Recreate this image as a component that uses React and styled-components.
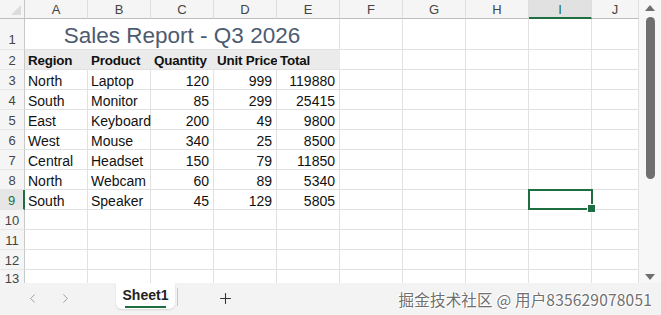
import React from "react";
import styled, { createGlobalStyle } from "styled-components";
import { ChevronLeft, ChevronRight, Plus } from "lucide-react";

const Global = createGlobalStyle`
  html, body { margin: 0; padding: 0; overflow: hidden; background: #fff; }
  * { box-sizing: border-box; }
`;

const GREEN = "#1e6e42";
const GRID = "#e1e1e1";
const FONT = `"Liberation Sans", Arial, sans-serif`;

const Page = styled.div`
  width: 661px;
  height: 315px;
  display: flex;
  flex-direction: column;
  font-family: ${FONT};
  position: relative;
  overflow: hidden;
`;

const Body = styled.div`
  display: flex;
  height: 283px;
  overflow: hidden;
`;

const Sheet = styled.div`
  display: grid;
  grid-template-columns: 25px repeat(9, 63px) 47px;
  grid-template-rows: 19px 31px repeat(11, 20px);
  width: 639px;
  overflow: hidden;
`;

const Corner = styled.div`
  background: #f5f5f5;
  border-right: 1px solid #c8c8c8;
  border-bottom: 1px solid #bdbdbd;
  position: relative;
  &::after {
    content: "";
    position: absolute;
    right: 3px;
    bottom: 3px;
    border-left: 10px solid transparent;
    border-bottom: 10px solid #dcdcdc;
  }
`;

const ColHeader = styled.div`
  background: ${(p) => (p.$active ? "#e1e1e1" : "#f5f5f5")};
  color: ${(p) => (p.$active ? GREEN : "#444")};
  border-right: 1px solid #dedede;
  border-bottom: ${(p) => (p.$active ? `2px solid ${GREEN}` : "1px solid #bdbdbd")};
  font-size: 13px;
  display: flex;
  align-items: center;
  justify-content: center;
  padding-top: 1px;
`;

const RowHeader = styled.div`
  background: ${(p) => (p.$active ? "#e6e6e6" : "#f5f5f5")};
  color: ${(p) => (p.$active ? GREEN : "#444")};
  border-right: ${(p) => (p.$active ? `2px solid ${GREEN}` : "1px solid #c8c8c8")};
  border-bottom: 1px solid #e6e6e6;
  font-size: 13px;
  display: flex;
  align-items: center;
  justify-content: center;
  padding-top: ${(p) => (p.$tall ? "10px" : "1px")};
`;

const Cell = styled.div`
  position: relative;
  background: ${(p) => p.$fill || "#fff"};
  border-right: 1px solid ${(p) => p.$fill || GRID};
  border-bottom: 1px solid ${GRID};
  font-size: 14px;
  font-weight: ${(p) => (p.$bold ? 700 : 400)};
  color: #111;
  display: flex;
  align-items: center;
  justify-content: ${(p) => (p.$align === "right" ? "flex-end" : "flex-start")};
  padding: 2px 4px 0 3px;
  white-space: nowrap;
  overflow: visible;
  z-index: ${(p) => (p.$selected ? 3 : p.$bold ? 1 : 0)};
`;

const HeadText = styled.span`
  font-size: 13.4px;
  letter-spacing: -0.2px;
`;

const TitleCell = styled.div`
  grid-column: span 5;
  border-right: 1px solid ${GRID};
  border-bottom: 1px solid ${GRID};
  display: flex;
  align-items: flex-end;
  justify-content: center;
  font-size: 22.5px;
  color: #4d5b70;
  padding-bottom: 2px;
  line-height: 1;
`;

const Selection = styled.div`
  position: absolute;
  left: -1px;
  top: -1px;
  right: -2px;
  bottom: -1px;
  border: 2px solid ${GREEN};
  &::after {
    content: "";
    position: absolute;
    right: -5px;
    bottom: -5px;
    width: 7px;
    height: 7px;
    background: ${GREEN};
    border: 1px solid #fff;
  }
`;

const Scrollbar = styled.div`
  width: 22px;
  background: #f7f7f7;
  display: flex;
  flex-direction: column;
  align-items: center;
`;

const Arrow = styled.div`
  width: 0;
  height: 0;
  border-left: 5px solid transparent;
  border-right: 5px solid transparent;
  ${(p) =>
    p.$down
      ? `border-top: 6px solid #6e6e6e; margin-top: auto; margin-bottom: 3px;`
      : `border-bottom: 6px solid #6e6e6e; margin-top: 5px;`}
`;

const Thumb = styled.div`
  width: 9px;
  height: 162px;
  margin-top: 6px;
  border-radius: 5px;
  background: #6f6f6f;
`;

const TabBar = styled.div`
  height: 32px;
  background: #f3f3f3;
  display: flex;
  align-items: flex-start;
  position: relative;
`;

const Nav = styled.div`
  display: flex;
  gap: 18px;
  padding: 8px 0 0 25px;
  width: 116px;
  color: #9a9a9a;
`;

const Tab = styled.div`
  width: 59px;
  height: 26px;
  background: #fff;
  border-radius: 0 0 6px 6px;
  box-shadow: 0 1px 2px rgba(0, 0, 0, 0.12);
  display: flex;
  flex-direction: column;
  align-items: center;
  padding-top: 4px;
  font-size: 14px;
  font-weight: 600;
  color: #222;
`;

const Underline = styled.div`
  width: 41px;
  height: 2px;
  margin-top: 3px;
  background: ${GREEN};
`;

const Sep = styled.div`
  width: 1px;
  height: 18px;
  background: #c8c8c8;
  margin: 5px 0 0 2px;
`;

const AddBtn = styled.div`
  margin: 7px 0 0 39px;
  color: #333;
  display: flex;
`;

const Watermark = styled.div`
  position: absolute;
  right: 9px;
  top: 5px;
  font-family: "Noto Sans CJK SC", sans-serif;
  font-size: 15.5px;
  color: #6f6f6f;
  letter-spacing: 0.2px;
  text-shadow: 0 0 1px #fff, 1px 1px 0 #fff, -1px -1px 0 #fff;
`;

const cols = ["A", "B", "C", "D", "E", "F", "G", "H", "I", "J"];
const heads = ["Region", "Product", "Quantity", "Unit Price", "Total"];
const data = [
  ["North", "Laptop", 120, 999, 119880],
  ["South", "Monitor", 85, 299, 25415],
  ["East", "Keyboard", 200, 49, 9800],
  ["West", "Mouse", 340, 25, 8500],
  ["Central", "Headset", 150, 79, 11850],
  ["North", "Webcam", 60, 89, 5340],
  ["South", "Speaker", 45, 129, 5805],
];
const ACTIVE_COL = 8;
const ACTIVE_ROW = 9;

function Blank({ r, c }) {
  const sel = r === ACTIVE_ROW && c === ACTIVE_COL;
  return <Cell $selected={sel}>{sel && <Selection />}</Cell>;
}

export default function App() {
  const cells = [<Corner key="corner" />];
  cols.forEach((c, i) =>
    cells.push(
      <ColHeader key={"h" + c} $active={i === ACTIVE_COL}>
        {c}
      </ColHeader>
    )
  );

  // row 1: merged title
  cells.push(<RowHeader key="r1" $tall>1</RowHeader>);
  cells.push(<TitleCell key="title">Sales Report - Q3 2026</TitleCell>);
  for (let c = 5; c < 10; c++) cells.push(<Blank key={"1-" + c} r={1} c={c} />);

  // row 2: header row
  cells.push(<RowHeader key="r2">2</RowHeader>);
  heads.forEach((h, i) =>
    cells.push(
      <Cell key={"2-" + i} $fill="#ebebeb" $bold>
        <HeadText>{h}</HeadText>
      </Cell>
    )
  );
  for (let c = 5; c < 10; c++) cells.push(<Blank key={"2-" + c} r={2} c={c} />);

  // rows 3..13
  for (let r = 3; r <= 13; r++) {
    const row = data[r - 3];
    cells.push(
      <RowHeader key={"r" + r} $active={r === ACTIVE_ROW}>
        {r}
      </RowHeader>
    );
    for (let c = 0; c < 10; c++) {
      if (row && c < 5) {
        const v = row[c];
        cells.push(
          <Cell key={r + "-" + c} $align={typeof v === "number" ? "right" : "left"}>
            {v}
          </Cell>
        );
      } else {
        cells.push(<Blank key={r + "-" + c} r={r} c={c} />);
      }
    }
  }

  return (
    <Page>
      <Global />
      <Body>
        <Sheet>{cells}</Sheet>
        <Scrollbar>
          <Arrow />
          <Thumb />
          <Arrow $down />
        </Scrollbar>
      </Body>
      <TabBar>
        <Nav>
          <ChevronLeft size={15} strokeWidth={1.5} />
          <ChevronRight size={15} strokeWidth={1.5} />
        </Nav>
        <Tab>
          Sheet1
          <Underline />
        </Tab>
        <Sep />
        <AddBtn>
          <Plus size={17} strokeWidth={1.5} />
        </AddBtn>
        <Watermark>掘金技术社区 @ 用户835629078051</Watermark>
      </TabBar>
    </Page>
  );
}
